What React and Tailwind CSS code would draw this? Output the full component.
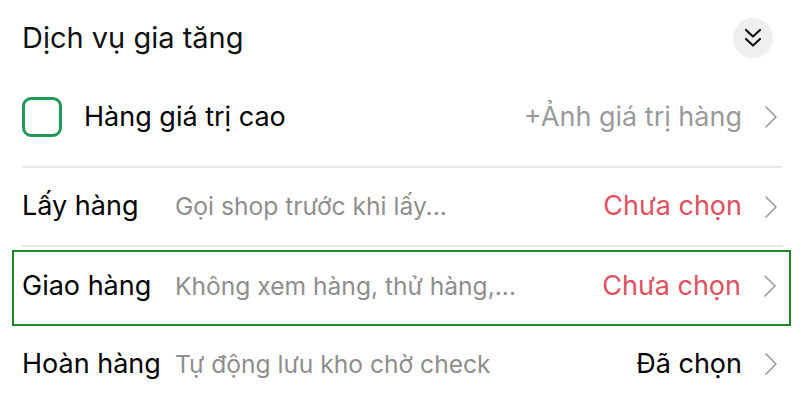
function Chevron() {
  return (
    <svg width="14" height="24" viewBox="0 0 14 24" className="ml-[22px] shrink-0">
      <path d="M2 2 L12 12 L2 22" fill="none" stroke="#9a9a9a" strokeWidth="1.6" strokeLinecap="round" strokeLinejoin="round" />
    </svg>
  );
}

function Dong({ nhan, mota, trangThai, mau }) {
  return (
    <div className="flex h-full items-center">
      <span className="w-[153px] shrink-0 text-black">{nhan}</span>
      <span className="flex-1 truncate text-[24.6px] text-[#8e8e8e]">{mota}</span>
      <span className={mau}>{trangThai}</span>
      <Chevron />
    </div>
  );
}

export default function App() {
  return (
    <div className="h-[396px] w-[800px] overflow-hidden bg-white text-[27px]" style={{ fontFamily: 'Inter, "Liberation Sans", sans-serif' }}>
      <div className="px-[22px]">
        <div className="flex h-[76px] items-center justify-between">
          <span className="text-[29px] text-[#111]">Dịch vụ gia tăng</span>
          <div className="mr-[5px] flex h-[40px] w-[40px] items-center justify-center rounded-full bg-[#efefef]">
            <svg width="20" height="22" viewBox="0 0 20 22">
              <path d="M3 3 L10 9.5 L17 3 M3 12 L10 18.5 L17 12" fill="none" stroke="#111" strokeWidth="2.2" strokeLinecap="round" strokeLinejoin="round" />
            </svg>
          </div>
        </div>

        <div className="flex h-[82px] items-center">
          <div className="h-[40px] w-[40px] shrink-0 rounded-[9px] border-[3px] border-[#22985a]" />
          <span className="ml-[22px] flex-1 text-black">Hàng giá trị cao</span>
          <span className="text-[#9a9a9a]">+Ảnh giá trị hàng</span>
          <Chevron />
        </div>

        <div className="h-[8px]" />
        <div className="mr-[-5px] h-[2px] bg-[#e8e8e8]" />

        <div className="h-[77px]">
          <Dong nhan="Lấy hàng" mota="Gọi shop trước khi lấy..." trangThai="Chưa chọn" mau="text-[#e0505f]" />
        </div>
        <div className="mr-[-5px] h-[2px] bg-[#e8e8e8]" />

        <div className="mr-[-13px] ml-[-10px] mt-[3px] h-[76px] border-2 border-[#1f8a25] pb-[4px] pl-[8px] pr-[12px]">
          <Dong nhan="Giao hàng" mota="Không xem hàng, thử hàng,..." trangThai="Chưa chọn" mau="text-[#e0505f]" />
        </div>

        <div className="h-[76px]">
          <Dong nhan="Hoàn hàng" mota="Tự động lưu kho chờ check" trangThai="Đã chọn" mau="text-black" />
        </div>
      </div>
    </div>
  );
}
